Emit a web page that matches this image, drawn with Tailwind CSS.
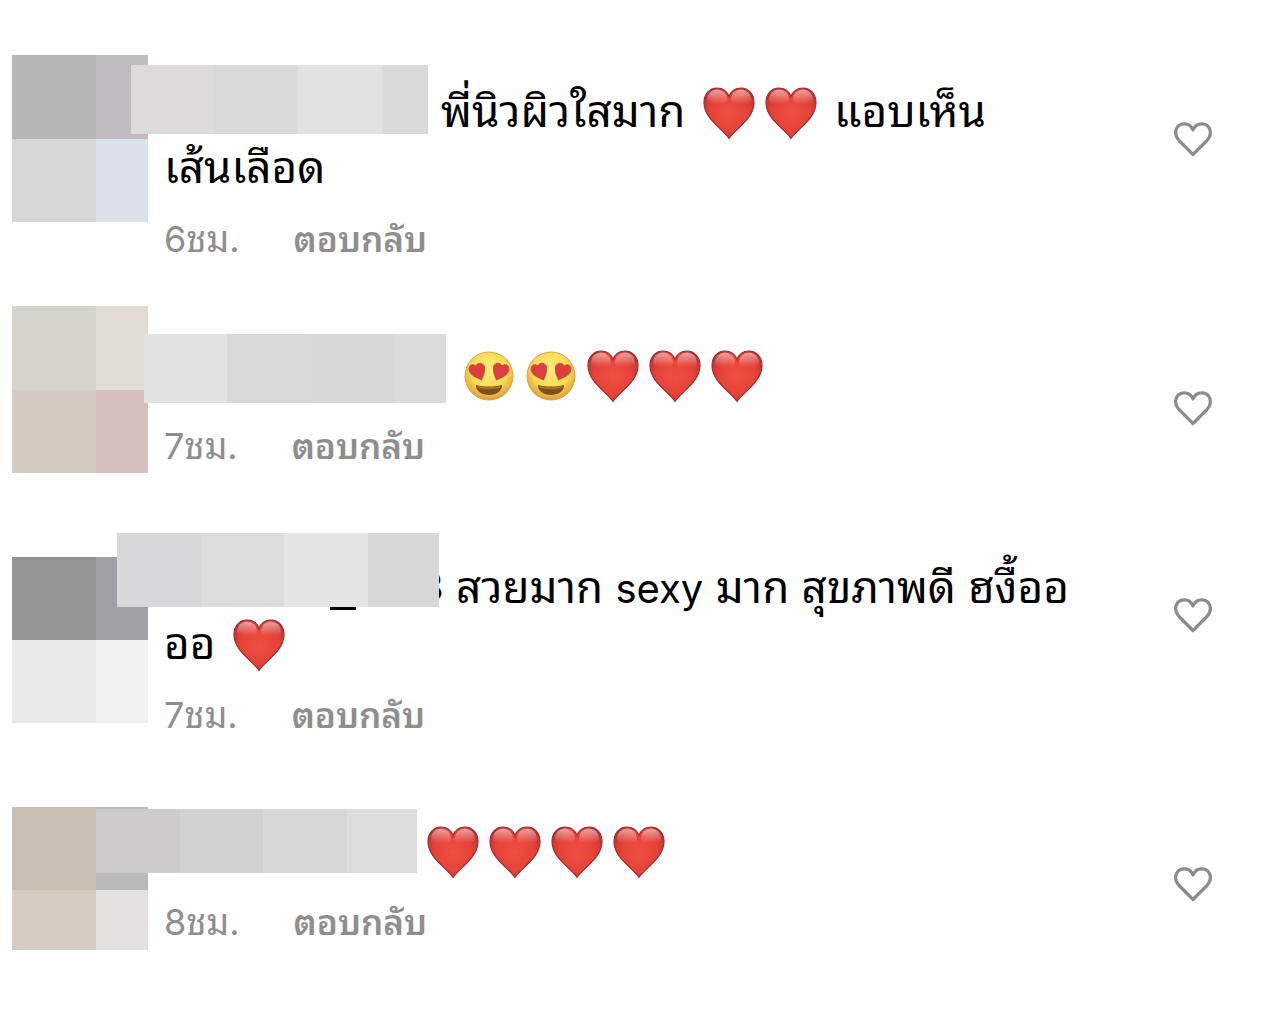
<!DOCTYPE html>
<html lang="th">
<head>
  <meta charset="UTF-8" />
  <meta name="viewport" content="width=device-width, initial-scale=1.0" />
  <script src="https://cdn.jsdelivr.net/npm/@tailwindcss/browser@4"></script>
  <title>Comments</title>
</head>
<body class="bg-white text-black font-['Inter','Thonburi','Noto_Sans_Thai_Looped','Loma','Garuda','Waree','FreeSans','Noto_Sans',sans-serif]">
  <!-- Shared icons -->
  <svg class="absolute w-0 h-0" aria-hidden="true">
    <defs>
      <radialGradient id="heart-fill" cx="50%" cy="50%" r="62%">
        <stop offset="0" stop-color="#ee4f42" />
        <stop offset="0.6" stop-color="#e64238" />
        <stop offset="0.85" stop-color="#cd3533" />
        <stop offset="1" stop-color="#9c2a2c" />
      </radialGradient>
      <linearGradient id="heart-shine" x1="0" y1="0" x2="0" y2="1">
        <stop offset="0" stop-color="#fff" stop-opacity="0.55" />
        <stop offset="0.75" stop-color="#fff" stop-opacity="0" />
      </linearGradient>
      <radialGradient id="face-fill" cx="50%" cy="38%" r="62%">
        <stop offset="0" stop-color="#ffee7c" />
        <stop offset="0.6" stop-color="#fadb55" />
        <stop offset="1" stop-color="#dd9c3c" />
      </radialGradient>
      <symbol id="heart" viewBox="0 0 52 54">
        <path d="M26 52.500C20 43 1 33 1 16.500C1 8 6.500 2 14 2C19.500 2 24 5 26 10.500C28 5 32.500 2 38 2C45.500 2 51 8 51 16.500C51 33 32 43 26 52.500Z" fill="url(#heart-fill)" stroke="#9b3032" stroke-width="1.200" />
        <ellipse cx="14" cy="13" rx="10" ry="9.500" fill="url(#heart-shine)" />
        <ellipse cx="38" cy="13" rx="10" ry="9.500" fill="url(#heart-shine)" />
      </symbol>
      <symbol id="love-face" viewBox="0 0 52 54">
        <circle cx="26" cy="27" r="24" fill="url(#face-fill)" stroke="#dba04a" stroke-width="1" />
        <path d="M18.500 31C14 28.500 7 26.500 6.200 21C5.600 16.500 9.500 14 13 17C14.500 13 20.500 13.500 21.500 18C22.300 22.500 20 27.500 18.500 31Z" fill="#df3e41" stroke="#b9423a" stroke-width="0.800" />
        <path d="M33.500 31C38 28.500 45 26.500 45.800 21C46.400 16.500 42.500 14 39 17C37.500 13 31.500 13.500 30.500 18C29.700 22.500 32 27.500 33.500 31Z" fill="#df3e41" stroke="#b9423a" stroke-width="0.800" />
        <path d="M13 36C21 38 31 38 39 36C39.500 42 33 46 26 46C19 46 12.500 42 13 36Z" fill="#7e5018" />
        <path d="M14.500 37C22 38.700 30 38.700 37.500 37L37 39C30 40.500 22 40.500 15 39Z" fill="#a67a2a" />
      </symbol>
      <symbol id="like" viewBox="0 0 40 36">
        <path d="M20 33.500L6 19.500C0 13 2.500 3 11 2.800C15.500 2.700 18.500 5 20 9C21.500 5 24.500 2.700 29 2.800C37.500 3 40 13 34 19.500Z" fill="none" stroke="#8c8c8c" stroke-width="3.200" stroke-linejoin="round" />
      </symbol>
    </defs>
  </svg>

  <main class="pt-10 pl-3 pr-[67px]">
    <ul>
      <li class="flex gap-4 min-h-[263px]">
        <div class="pt-[15px] shrink-0">
          <div class="grid grid-cols-[84px_52px] grid-rows-[84px_83px]">
            <span class="bg-[#b6b7b2]"></span><span class="bg-[#bfbbbf]"></span>
            <span class="bg-[#d7d7d5]"></span><span class="bg-[#dce0e7]"></span>
          </div>
        </div>
        <div class="relative flex-1 pt-[43px]">
          <div class="absolute left-[-33px] top-[25px] h-[69px] w-[297px] grid grid-cols-[83px_84px_84px_46px]">
            <span class="bg-[#dddadb]"></span><span class="bg-[#d9d9d9]"></span><span class="bg-[#e2e2e2]"></span><span class="bg-[#d9d9d9]"></span>
          </div>
          <p class="text-[44px] leading-[56px] indent-[277px]">พี่นิวผิวใสมาก <svg class="inline-block w-[52px] h-[54px] mx-[5px] -my-2 align-[-5px]"><use href="#heart" /></svg><svg class="inline-block w-[52px] h-[54px] mx-[5px] -my-2 align-[-5px]"><use href="#heart" /></svg> แอบเห็น<br />เส้นเลือด</p>
          <div class="flex gap-[54px] pt-4 text-[36px] leading-[56px] text-[#8e8e8e]">
            <span>6ชม.</span>
            <button class="text-[35px] font-semibold">ตอบกลับ</button>
          </div>
        </div>
        <button class="self-start pt-[81px]" aria-label="ถูกใจ"><svg class="block w-10 h-9"><use href="#like" /></svg></button>
      </li>

      <li class="flex gap-4 min-h-[213px]">
        <div class="pt-[3px] shrink-0">
          <div class="grid grid-cols-[84px_52px] grid-rows-[84px_83px]">
            <span class="bg-[#d6d3cc]"></span><span class="bg-[#e0dbd4]"></span>
            <span class="bg-[#d2cabe]"></span><span class="bg-[#d6bfbf]"></span>
          </div>
        </div>
        <div class="relative flex-1 pt-[43px]">
          <div class="absolute left-[-20px] top-[31px] h-[69px] w-[302px] grid grid-cols-[83px_84px_84px_51px]">
            <span class="bg-[#e2e2e2]"></span><span class="bg-[#d9d9d9]"></span><span class="bg-[#d8d8d8]"></span><span class="bg-[#dbdbdb]"></span>
          </div>
          <p class="text-[44px] leading-[56px] indent-[294px]"><svg class="inline-block w-[52px] h-[54px] mx-[5px] -my-2 align-[-5px]"><use href="#love-face" /></svg><svg class="inline-block w-[52px] h-[54px] mx-[5px] -my-2 align-[-5px]"><use href="#love-face" /></svg><svg class="inline-block w-[52px] h-[54px] mx-[5px] -my-2 align-[-5px]"><use href="#heart" /></svg><svg class="inline-block w-[52px] h-[54px] mx-[5px] -my-2 align-[-5px]"><use href="#heart" /></svg><svg class="inline-block w-[52px] h-[54px] mx-[5px] -my-2 align-[-5px]"><use href="#heart" /></svg></p>
          <div class="flex gap-[54px] pt-4 text-[36px] leading-[56px] text-[#8e8e8e]">
            <span>7ชม.</span>
            <button class="text-[35px] font-semibold">ตอบกลับ</button>
          </div>
        </div>
        <button class="self-start pt-[87px]" aria-label="ถูกใจ"><svg class="block w-10 h-9"><use href="#like" /></svg></button>
      </li>

      <li class="flex gap-4 min-h-[263px]">
        <div class="pt-[41px] shrink-0">
          <div class="grid grid-cols-[84px_52px] grid-rows-[83px_83px]">
            <span class="bg-[#949495]"></span><span class="bg-[#a0a1a7]"></span>
            <span class="bg-[#e9e9e9]"></span><span class="bg-[#f1f1f1]"></span>
          </div>
        </div>
        <div class="relative flex-1 pt-[43px]">
          <!-- tail of the user name, sticking out from under the bar -->
          <span class="absolute left-[166px] top-[90px] h-[4px] w-[26px] bg-black"></span>
          <span class="absolute left-[255px] top-[43px] text-[40px] leading-[56px]">8</span>
          <div class="absolute left-[-47px] top-[17px] h-[74px] w-[322px] grid grid-cols-[84px_83px_84px_71px]">
            <span class="bg-[#d8d8da]"></span><span class="bg-[#dcdcdc]"></span><span class="bg-[#e5e5e5]"></span><span class="bg-[#d8d8d8]"></span>
          </div>
          <p class="text-[44px] leading-[56px] indent-[292px]">สวยมาก <span class="text-[40px] leading-none">sexy</span> มาก สุขภาพดี ฮงื้ออ<br />ออ <svg class="inline-block w-[52px] h-[54px] mx-[5px] -my-2 align-[-5px]"><use href="#heart" /></svg></p>
          <div class="flex gap-[54px] pt-4 text-[36px] leading-[56px] text-[#8e8e8e]">
            <span>7ชม.</span>
            <button class="text-[35px] font-semibold">ตอบกลับ</button>
          </div>
        </div>
        <button class="self-start pt-[81px]" aria-label="ถูกใจ"><svg class="block w-10 h-9"><use href="#like" /></svg></button>
      </li>

      <li class="flex gap-4">
        <div class="pt-7 shrink-0">
          <div class="grid grid-cols-[84px_52px] grid-rows-[83px_60px]">
            <span class="bg-[#c9beb4]"></span><span class="bg-[#bababa]"></span>
            <span class="bg-[#d5cbbf]"></span><span class="bg-[#e4e0dd]"></span>
          </div>
        </div>
        <div class="relative flex-1 pt-[43px]">
          <div class="absolute left-[-68px] top-[30px] h-[64px] w-[321px] grid grid-cols-[84px_83px_84px_70px]">
            <span class="bg-[#cdcbcc]"></span><span class="bg-[#d1d1d1]"></span><span class="bg-[#d7d7d7]"></span><span class="bg-[#dddddd]"></span>
          </div>
          <p class="text-[44px] leading-[56px] indent-[258px]"><svg class="inline-block w-[52px] h-[54px] mx-[5px] -my-2 align-[-5px]"><use href="#heart" /></svg><svg class="inline-block w-[52px] h-[54px] mx-[5px] -my-2 align-[-5px]"><use href="#heart" /></svg><svg class="inline-block w-[52px] h-[54px] mx-[5px] -my-2 align-[-5px]"><use href="#heart" /></svg><svg class="inline-block w-[52px] h-[54px] mx-[5px] -my-2 align-[-5px]"><use href="#heart" /></svg></p>
          <div class="flex gap-[54px] pt-4 text-[36px] leading-[56px] text-[#8e8e8e]">
            <span>8ชม.</span>
            <button class="text-[35px] font-semibold">ตอบกลับ</button>
          </div>
        </div>
        <button class="self-start pt-[87px]" aria-label="ถูกใจ"><svg class="block w-10 h-9"><use href="#like" /></svg></button>
      </li>
    </ul>
  </main>
</body>
</html>
